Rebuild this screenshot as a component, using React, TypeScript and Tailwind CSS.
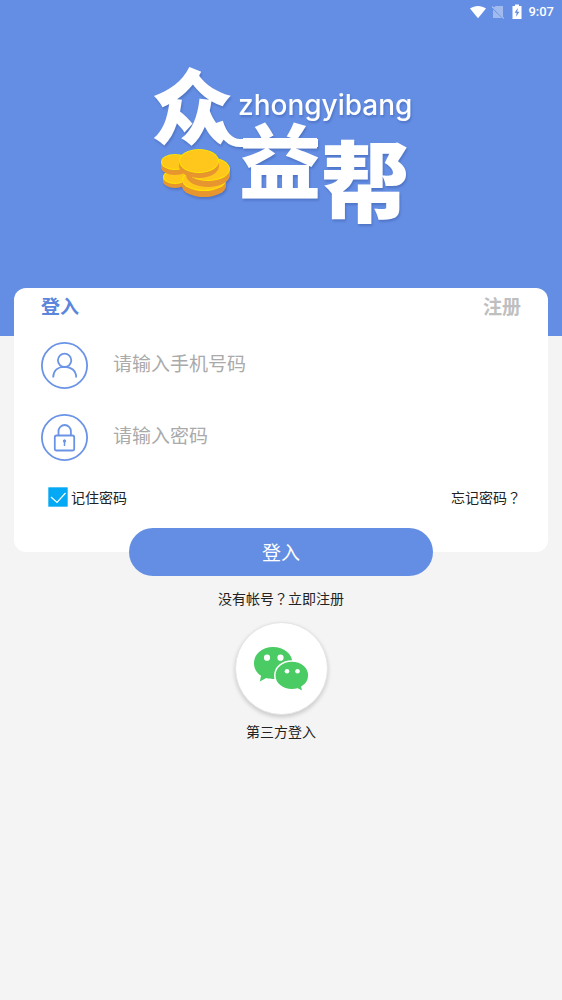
import { useState } from 'react';

function StatusBar() {
    return (
        <div className="flex h-6 items-center justify-end pr-2 text-white">
            <svg className="mr-1.5 h-4 w-4" viewBox="0 0 16 16" fill="currentColor">
                <path d="M0 4.6C4.8 1 11.2 1 16 4.6L8 14.200z" />
            </svg>
            <svg className="mr-2 h-4 w-3 opacity-40" viewBox="0 0 12 16">
                <path d="M4 2h7v11.500L1 3.800M1 5.500V14h9z" fill="currentColor" />
                <path d="M0 2.500l12 12" stroke="currentColor" strokeWidth="1.2" />
            </svg>
            <svg className="mr-1.5 h-4 w-2.5" viewBox="0 0 10 16">
                <path d="M3 .5h4V2h2.500v13H.5V2H3z" fill="currentColor" />
                <path d="M5.800 4L2.600 8.700h2L4 12.700l3.500-5H5.300z" fill="#648ee4" />
            </svg>
            <time className="font-[Roboto,sans-serif] text-[13px] leading-6 font-medium">9:07</time>
        </div>
    );
}

function Coin({ cx, cy, rx, ry, depth }: { cx: number; cy: number; rx: number; ry: number; depth: number }) {
    return (
        <g>
            <path
                d={`M${cx - rx} ${cy}v${depth}a${rx} ${ry} 0 0 0 ${rx * 2} 0v${-depth}z`}
                fill="#e7952f"
            />
            <ellipse cx={cx} cy={cy} rx={rx} ry={ry} fill="#ffe600" />
            <ellipse cx={cx} cy={cy} rx={rx - 1} ry={ry - 1} fill="#ffc61c" />
        </g>
    );
}

function Logo() {
    return (
        <svg
            className="mx-auto h-[216px] w-[290px] drop-shadow-[1px_2px_1px_rgba(40,70,140,0.35)]"
            viewBox="136 24 290 216"
            role="img"
            aria-label="众益帮 zhongyibang"
        >
            <g
                fill="#fff"
                fontFamily="'Noto Sans CJK SC', sans-serif"
                fontWeight="900"
            >
                <text x="151" y="138" fontSize="82">众</text>
                <text x="239" y="193" fontSize="82">益</text>
                <text x="321" y="215" fontSize="88">帮</text>
            </g>
            {/* swash that ties the first character to the second */}
            <path
                d="M219 122C223 135 229 143 240 143H318"
                fill="none"
                stroke="#fff"
                strokeWidth="8"
            />
            <text x="238" y="115" fill="#fff" fontFamily="Inter, sans-serif" fontWeight="500" fontSize="28">
                zhongyibang
            </text>
            <Coin cx={175} cy={177} rx={12} ry={7} depth={4} />
            <Coin cx={204} cy={180} rx={22} ry={11} depth={6} />
            <Coin cx={175} cy={162} rx={14} ry={8} depth={5} />
            <Coin cx={208} cy={169} rx={22} ry={12} depth={6} />
            <Coin cx={199} cy={161} rx={20} ry={12} depth={5} />
        </svg>
    );
}

function UserIcon() {
    return (
        <svg className="size-12 shrink-0" viewBox="0 0 48 48" fill="none" stroke="#6b94e6" strokeWidth="1.8">
            <circle cx="23.500" cy="23.500" r="22.600" />
            <circle cx="23.600" cy="18.300" r="6.700" />
            <path d="M12.200 35.500C12.200 28.500 17 24.800 23.600 24.800S35.200 28.500 35.200 35.500" />
        </svg>
    );
}

function LockIcon() {
    return (
        <svg className="size-12 shrink-0" viewBox="0 0 48 48" fill="none" stroke="#6b94e6" strokeWidth="1.8">
            <circle cx="23.500" cy="23.500" r="22.600" />
            <rect x="13.800" y="21.500" width="19.400" height="15" rx="1.800" />
            <path d="M17.500 21.500v-4.300a6.200 6.200 0 0 1 12.400 0v4.300" />
            <circle cx="23.500" cy="27" r="1.200" fill="#6b94e6" strokeWidth="1" />
            <path d="M23.500 27v5" strokeWidth="1.500" />
        </svg>
    );
}

function WechatIcon() {
    return (
        <svg className="h-[46px] w-14" viewBox="0 0 56 46">
            <path
                d="M20 1C9 1 1 8 1 17.200c0 5.300 2.700 9.700 7.100 12.600L6.800 35.500l6.500-3.400c2.200.7 4.300.9 6.700.9 11 0 19.500-6.700 19.500-15.800S31 1 20 1z"
                fill="#4acb64"
            />
            <path
                d="M39 15c-9.700 0-17.200 6.300-17.200 14.400S29.300 43.800 39 43.800c2 0 3.900-.2 5.700-.8l5.500 2.900-1.300-4.900c4.100-2.700 6.900-6.700 6.900-11.600C55.800 21.300 48.700 15 39 15z"
                fill="#4acb64"
                stroke="#fff"
                strokeWidth="1.500"
            />
            <g fill="#fff">
                <circle cx="14" cy="11.700" r="3.100" />
                <circle cx="27.500" cy="11.700" r="3.100" />
                <circle cx="34" cy="25.200" r="2.300" />
                <circle cx="44.500" cy="25.200" r="2.300" />
            </g>
        </svg>
    );
}

export default function App() {
    const [phone, setPhone] = useState('');
    const [password, setPassword] = useState('');
    const [remember, setRemember] = useState(true);

    return (
        <div
            lang="zh-CN"
            className="min-h-screen bg-[#f4f4f4] font-['Noto_Sans_CJK_SC',sans-serif] text-sm leading-5 text-[#222222]"
        >
            <header className="bg-[#648ee4] pb-24">
                <StatusBar />
                <Logo />
            </header>

            <form onSubmit={(e) => e.preventDefault()}>
                <div className="mx-3.5 -mt-12 rounded-xl bg-white px-[27px] pb-[45px]">
                    <div className="flex justify-between text-[19px] leading-9 font-bold">
                        <button type="button" className="text-[#5b86dc]">登入</button>
                        <button type="button" className="text-[#bfbfbf]">注册</button>
                    </div>

                    <div className="mt-[18px] flex flex-col gap-6">
                        <label className="flex h-12 items-center">
                            <UserIcon />
                            <input
                                type="tel"
                                aria-label="手机号码"
                                placeholder="请输入手机号码"
                                value={phone}
                                onChange={(e) => setPhone(e.target.value)}
                                className="ml-6 h-12 min-w-0 flex-1 pb-2 text-[19px] outline-none placeholder:text-[#aaaaaa]"
                            />
                        </label>
                        <label className="flex h-12 items-center">
                            <LockIcon />
                            <input
                                type="password"
                                aria-label="密码"
                                placeholder="请输入密码"
                                value={password}
                                onChange={(e) => setPassword(e.target.value)}
                                className="ml-6 h-12 min-w-0 flex-1 pb-2 text-[19px] outline-none placeholder:text-[#aaaaaa]"
                            />
                        </label>
                    </div>

                    <div className="mt-[25px] flex items-center justify-between">
                        <label className="ml-[7px] flex items-center gap-[3px]">
                            <span className="grid">
                                <input
                                    type="checkbox"
                                    checked={remember}
                                    onChange={(e) => setRemember(e.target.checked)}
                                    className="peer col-start-1 row-start-1 size-5 appearance-none rounded-[1px] border border-[#4fc3f7] checked:bg-[#03a9f4]"
                                />
                                <svg
                                    className="pointer-events-none invisible col-start-1 row-start-1 size-5 peer-checked:visible"
                                    viewBox="0 0 20 20"
                                    fill="none"
                                    stroke="#fff"
                                    strokeWidth="1.2"
                                >
                                    <path d="M3 10l6 5.500L17.500 6" />
                                </svg>
                            </span>
                            记住密码
                        </label>
                        <a href="#forgot">
                            忘记密码<span className="font-['Noto_Sans_CJK_TC',sans-serif]" lang="zh-TW">？</span>
                        </a>
                    </div>
                </div>

                <button
                    type="submit"
                    className="mx-auto -mt-6 block h-12 w-[304px] rounded-full bg-[#648ee4] text-[19px] text-white"
                >
                    登入
                </button>
            </form>

            <div className="mt-3 flex flex-col items-center">
                <a href="#register">
                    没有帐号<span className="font-['Noto_Sans_CJK_TC',sans-serif]" lang="zh-TW">？</span>立即注册
                </a>
                <button
                    type="button"
                    aria-label="微信登入"
                    className="mt-3.5 flex size-[93px] items-center justify-center rounded-full border border-[#e4e4e4] bg-white shadow-[0_2px_4px_rgba(0,0,0,0.18)]"
                >
                    <WechatIcon />
                </button>
                <p className="mt-1.5">第三方登入</p>
            </div>
        </div>
    );
}
